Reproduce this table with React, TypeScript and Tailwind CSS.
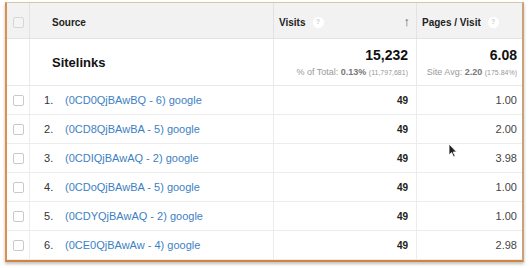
import React from "react";

const rows = [
  { n: 1, src: "(0CD0QjBAwBQ - 6) google", visits: "49", pages: "1.00" },
  { n: 2, src: "(0CD8QjBAwBA - 5) google", visits: "49", pages: "2.00" },
  { n: 3, src: "(0CDIQjBAwAQ - 2) google", visits: "49", pages: "3.98" },
  { n: 4, src: "(0CDoQjBAwBA - 5) google", visits: "49", pages: "1.00" },
  { n: 5, src: "(0CDYQjBAwAQ - 2) google", visits: "49", pages: "1.00" },
  { n: 6, src: "(0CE0QjBAwAw - 4) google", visits: "49", pages: "2.98" },
];

const Check = () => (
  <span className="block w-[11px] h-[11px] rounded-[2px] border border-[#c9c9c9] bg-white" />
);

const Help = () => (
  <span className="inline-flex items-center justify-center w-[11px] h-[11px] rounded-full bg-white text-[7px] text-[#d0d0d0] font-bold ml-[7px]">
    ?
  </span>
);

const App = () => {
  return (
    <div className="w-[529px] h-[268px] bg-white pt-[2px] pl-[5px]" style={{ fontFamily: '"Liberation Sans", Arial, sans-serif' }}>
      <div className="relative w-[519px] h-[260px] border-l-2 border-b-2 border-t border-r-2 border-l-[#d9914f] border-b-[#d08440] border-t-[#dcc4a8] border-r-[#c9a27a] shadow-[0_2px_3px_rgba(0,0,0,0.25)] overflow-hidden">
        <div className="grid grid-cols-[23px_244px_143px_1fr] text-[#333]">
          {/* header */}
          <div className="h-[36px] bg-[#f2f2f2] border-b border-r border-[#e2e2e2] flex items-center justify-center pt-[3px]">
            <span className="block w-[11px] h-[11px] rounded-[2px] border border-[#d6d6d6] bg-[#f4f4f4]" />
          </div>
          <div className="h-[36px] bg-[#f2f2f2] border-b border-r border-[#e2e2e2] flex items-center pl-[22px] pt-[3px] text-[10px] font-bold text-[#222]">
            Source
          </div>
          <div className="h-[36px] bg-[#f2f2f2] border-b border-r border-[#e2e2e2] flex items-center pl-[5px] pr-[6px] pt-[3px] text-[10px] font-bold text-[#222]">
            Visits
            <Help />
            <span className="ml-auto text-[#555] text-[13px] font-bold">↑</span>
          </div>
          <div className="h-[36px] bg-[#f2f2f2] border-b border-[#e2e2e2] flex items-center pl-[5px] pt-[3px] text-[10px] font-bold text-[#222]">
            Pages / Visit
            <Help />
          </div>

          {/* sitelinks */}
          <div className="h-[47px] border-b border-r border-[#e8e8e8]" />
          <div className="h-[47px] border-b border-r border-[#e8e8e8] flex items-center pl-[22px] pt-[2px] text-[13px] font-bold text-[#111]">
            Sitelinks
          </div>
          <div className="h-[47px] border-b border-r border-[#e8e8e8] flex flex-col items-end justify-center pr-[8px] pt-[1px]">
            <span className="text-[14px] font-bold text-[#111] leading-[16px]">15,232</span>
            <span className="text-[9px] text-[#999] mt-[4px] leading-[10px]">
              % of Total: <b className="text-[#777]">0.13%</b> <span className="text-[7px]">(11,797,681)</span>
            </span>
          </div>
          <div className="h-[47px] border-b border-[#e8e8e8] flex flex-col items-end justify-center pr-[5px] pt-[1px]">
            <span className="text-[14px] font-bold text-[#111] leading-[16px]">6.08</span>
            <span className="text-[9px] text-[#999] mt-[4px] leading-[10px]">
              Site Avg: <b className="text-[#777]">2.20</b> <span className="text-[7px]">(175.84%)</span>
            </span>
          </div>

          {rows.map((r) => (
            <React.Fragment key={r.n}>
              <div className="h-[29px] border-b border-r border-[#ececec] flex items-center justify-center">
                <Check />
              </div>
              <div className="h-[29px] border-b border-r border-[#ececec] flex items-center pl-[14px] text-[11px]">
                <span className="w-[21px] text-[#333]">{r.n}.</span>
                <span className="text-[#3d7fc3]">{r.src}</span>
              </div>
              <div className="h-[29px] border-b border-r border-[#ececec] flex items-center justify-end pr-[8px] text-[10px] font-bold text-[#222]">
                {r.visits}
              </div>
              <div className="h-[29px] border-b border-[#ececec] flex items-center justify-end pr-[5px] text-[11px] text-[#444]">
                {r.pages}
              </div>
            </React.Fragment>
          ))}
        </div>

        {/* mouse cursor */}
        <svg className="absolute left-[441px] top-[140px]" width="10" height="15" viewBox="0 0 10 15">
          <path d="M1 1 L1 12 L3.6 9.6 L5.6 14 L7.2 13.3 L5.2 9 L8.6 9 Z" fill="#222" stroke="#fff" strokeWidth="0.8" />
        </svg>
      </div>
    </div>
  );
};

export default App;
